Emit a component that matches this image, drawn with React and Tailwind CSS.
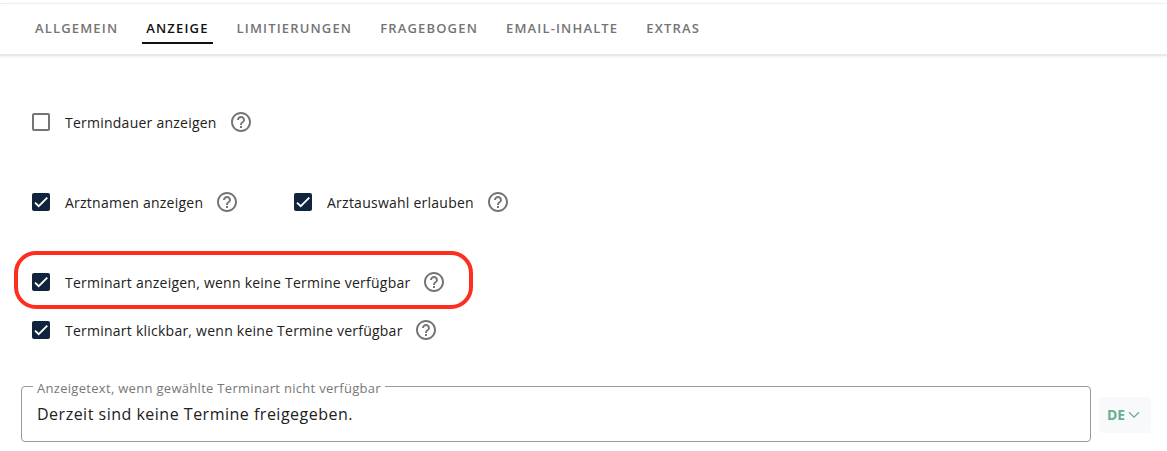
import React from 'react';
import { MdHelpOutline } from 'react-icons/md';

const tabs = ['ALLGEMEIN', 'ANZEIGE', 'LIMITIERUNGEN', 'FRAGEBOGEN', 'EMAIL-INHALTE', 'EXTRAS'];

const Tab = ({ label, active }) => (
  <button
    className={`h-8 px-1 pt-px border-b-2 text-[13px] leading-[30px] font-semibold tracking-[1.16px] whitespace-nowrap ${
      active ? 'border-[#111] text-[#111]' : 'border-transparent text-[#747474]'
    }`}
  >
    {label}
  </button>
);

const Checkbox = ({ checked }) => (
  <span
    className={`flex size-[18px] shrink-0 items-center justify-center rounded-[2px] border-2 ${
      checked ? 'border-[#10243e] bg-[#10243e]' : 'border-[#757575]'
    }`}
  >
    {checked && (
      <svg viewBox="0 0 24 24" className="size-[14px] shrink-0" fill="none" stroke="#fff" strokeWidth="3.12">
        <path d="M1.73,12.91 8.1,19.28 22.79,4.59" />
      </svg>
    )}
  </span>
);

const Option = ({ label, checked, className = '' }) => (
  <div className={`flex h-12 items-center ${className}`}>
    <Checkbox checked={checked} />
    <span className="ml-[15px] pt-0.5 text-sm tracking-[0.24px] whitespace-nowrap text-[#212121]">{label}</span>
    <MdHelpOutline className="ml-[11.8px] size-6 shrink-0 text-[#757575]" />
  </div>
);

const App = () => (
  <div className="h-[451px] w-full overflow-hidden bg-white font-['Open_Sans',sans-serif]">
    <div className="pt-[3px]">
      <nav className="flex h-[53px] gap-5 border-t border-b-2 border-t-[#eee] border-b-[#e6eaee] pt-2 pl-[31px] shadow-[0_1px_2px_rgba(0,0,0,0.06)]">
        {tabs.map((t) => (
          <Tab key={t} label={t} active={t === 'ANZEIGE'} />
        ))}
      </nav>
    </div>

    <div className="pt-[42px] pl-8">
      <Option label="Termindauer anzeigen" />
      <div className="mt-8 flex gap-[55px]">
        <Option label="Arztnamen anzeigen" checked />
        <Option label="Arztauswahl erlauben" checked />
      </div>
      <div className="mt-[25px] -ml-[18px] flex h-[58px] w-[459px] items-center rounded-[22px] border-4 border-[#ff2d20] pl-[14px]">
        <Option label="Terminart anzeigen, wenn keine Termine verfügbar" checked className="pt-1" />
      </div>
      <Option label="Terminart klickbar, wenn keine Termine verfügbar" checked className="-mt-[3px]" />
    </div>

    <div className="mt-[32px] flex pl-[21px]">
      <div className="relative h-14 w-[1070px] rounded-[4px] border border-[#999] px-[15px]">
        <span className="absolute -top-2 left-[11px] bg-white px-1 text-[13px] leading-[18px] tracking-[0.3px] whitespace-nowrap text-[#777]">
          Anzeigetext, wenn gewählte Terminart nicht verfügbar
        </span>
        <p className="pt-[15px] text-base tracking-[0.5px] text-[#212121]">Derzeit sind keine Termine freigegeben.</p>
      </div>
      <button className="mt-[11px] ml-2 flex h-9 w-[52px] items-center rounded-[4px] bg-[#f7f9fb] pl-2 text-sm font-bold text-[#67ad96]">
        DE
        <svg viewBox="0 0 12 8" className="ml-[2.5px] h-2 w-3" fill="none" stroke="currentColor" strokeWidth="1.3">
          <path d="M1 1.2 6 6.2 11 1.2" />
        </svg>
      </button>
    </div>
  </div>
);

export default App;
